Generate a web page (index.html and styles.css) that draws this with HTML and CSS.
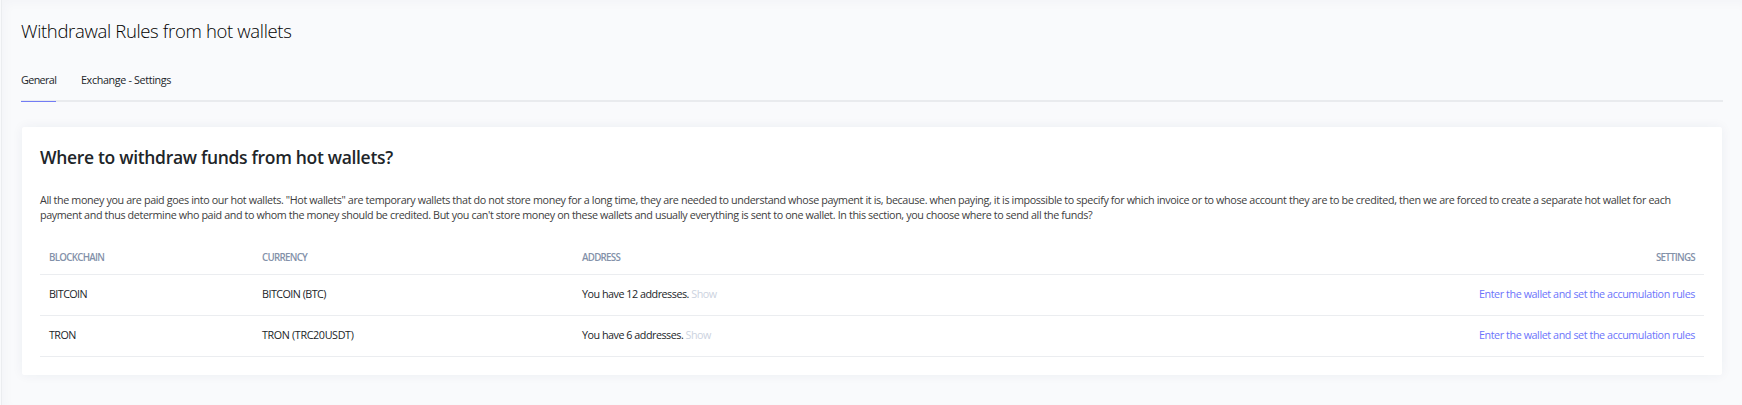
FILE: index.html
```
<!DOCTYPE html>
<html lang="en">
<head>
<meta charset="utf-8">
<title>Withdrawal Rules from hot wallets</title>
<link rel="stylesheet" href="styles.css">
</head>
<body>
<main class="page">
  <h1 class="page-title">Withdrawal Rules from hot wallets</h1>
  <nav class="tabs">
    <a class="tab tab-active">General</a>
    <a class="tab">Exchange - Settings</a>
  </nav>
  <section class="card">
    <h2 class="card-title">Where to withdraw funds from hot wallets?</h2>
    <p class="intro">All the money you are paid goes into our hot wallets. "Hot wallets" are temporary wallets that do not store money for a long time, they are needed to understand whose payment it is, because. when paying, it is impossible to specify for which invoice or to whose account they are to be credited, then we are forced to create a separate hot wallet for each<br><span class="intro-end">payment and thus determine who paid and to whom the money should be credited. But you can't store money on these wallets and usually everything is sent to one wallet. In this section, you choose where to send all the funds?</span></p>
    <div class="table">
      <div class="row head"><span>BLOCKCHAIN</span><span>CURRENCY</span><span>ADDRESS</span><span class="right">SETTINGS</span></div>
      <div class="row"><span class="name">BITCOIN</span><span class="currency">BITCOIN (BTC)</span><span class="address">You have 12 addresses. <a class="show">Show</a></span><span class="right"><a class="link">Enter the wallet and set the accumulation rules</a></span></div>
      <div class="row"><span class="name">TRON</span><span class="currency currency-long">TRON (TRC20USDT)</span><span class="address">You have 6 addresses. <a class="show">Show</a></span><span class="right"><a class="link">Enter the wallet and set the accumulation rules</a></span></div>
    </div>
  </section>
</main>
</body>
</html>
```
FILE: styles.css
```
* { box-sizing: border-box; }
body {
  margin: 0;
  background: #f9fafc;
  color: #212529;
  font: 10.75px/15px "Open Sans", "Noto Sans", sans-serif;
}
.page {
  min-height: 405px;
  margin-left: 1px;
  padding: 17px 19px 0;
  border-left: 1px solid #ebedf0;
  box-shadow: inset 4px 4px 10px rgba(40, 50, 80, 0.025);
}
.page-title { margin: 0; font-size: 18.5px; font-weight: 300; line-height: 28px; letter-spacing: -0.34px; color: #000; }
.tabs { display: flex; gap: 25px; margin-top: 21px; height: 36px; border-bottom: 2px solid #e9ebee; }
.tab { height: 36px; padding-top: 7px; letter-spacing: -0.35px; }
.tab-active { width: 35px; border-bottom: 1px solid #727cf5; letter-spacing: -0.61px; }
.card {
  height: 248px;
  margin: 25px 1px 0;
  padding: 17px 18px 0;
  background: #fff;
  border-radius: 2px;
  box-shadow: 0 0 12px rgba(40, 50, 80, 0.06);
}
.card-title { margin: 0; font-size: 17.5px; font-weight: 600; line-height: 26px; letter-spacing: -0.32px; }
.intro { margin: 23px 0 0; white-space: nowrap; color: #3d3d3d; letter-spacing: -0.364px; }
.intro-end { letter-spacing: -0.379px; }
.table { margin-top: 22px; }
.row {
  display: grid;
  grid-template-columns: 213px 320px 1fr 320px;
  align-items: center;
  height: 41px;
  padding: 0 9px 2px;
  border-bottom: 1px solid #ebedf0;
}
.head {
  height: 30px;
  padding-bottom: 5px;
  font-size: 9.75px;
  font-weight: 600;
  letter-spacing: -0.72px;
  color: #8391a9;
}
.right { text-align: right; }
.name { letter-spacing: -0.58px; }
.currency { letter-spacing: -0.53px; }
.currency-long { letter-spacing: -0.36px; }
.address { letter-spacing: -0.48px; }
.show { color: #ccd3e0; }
.link { color: #6c74fb; letter-spacing: -0.415px; }
```
